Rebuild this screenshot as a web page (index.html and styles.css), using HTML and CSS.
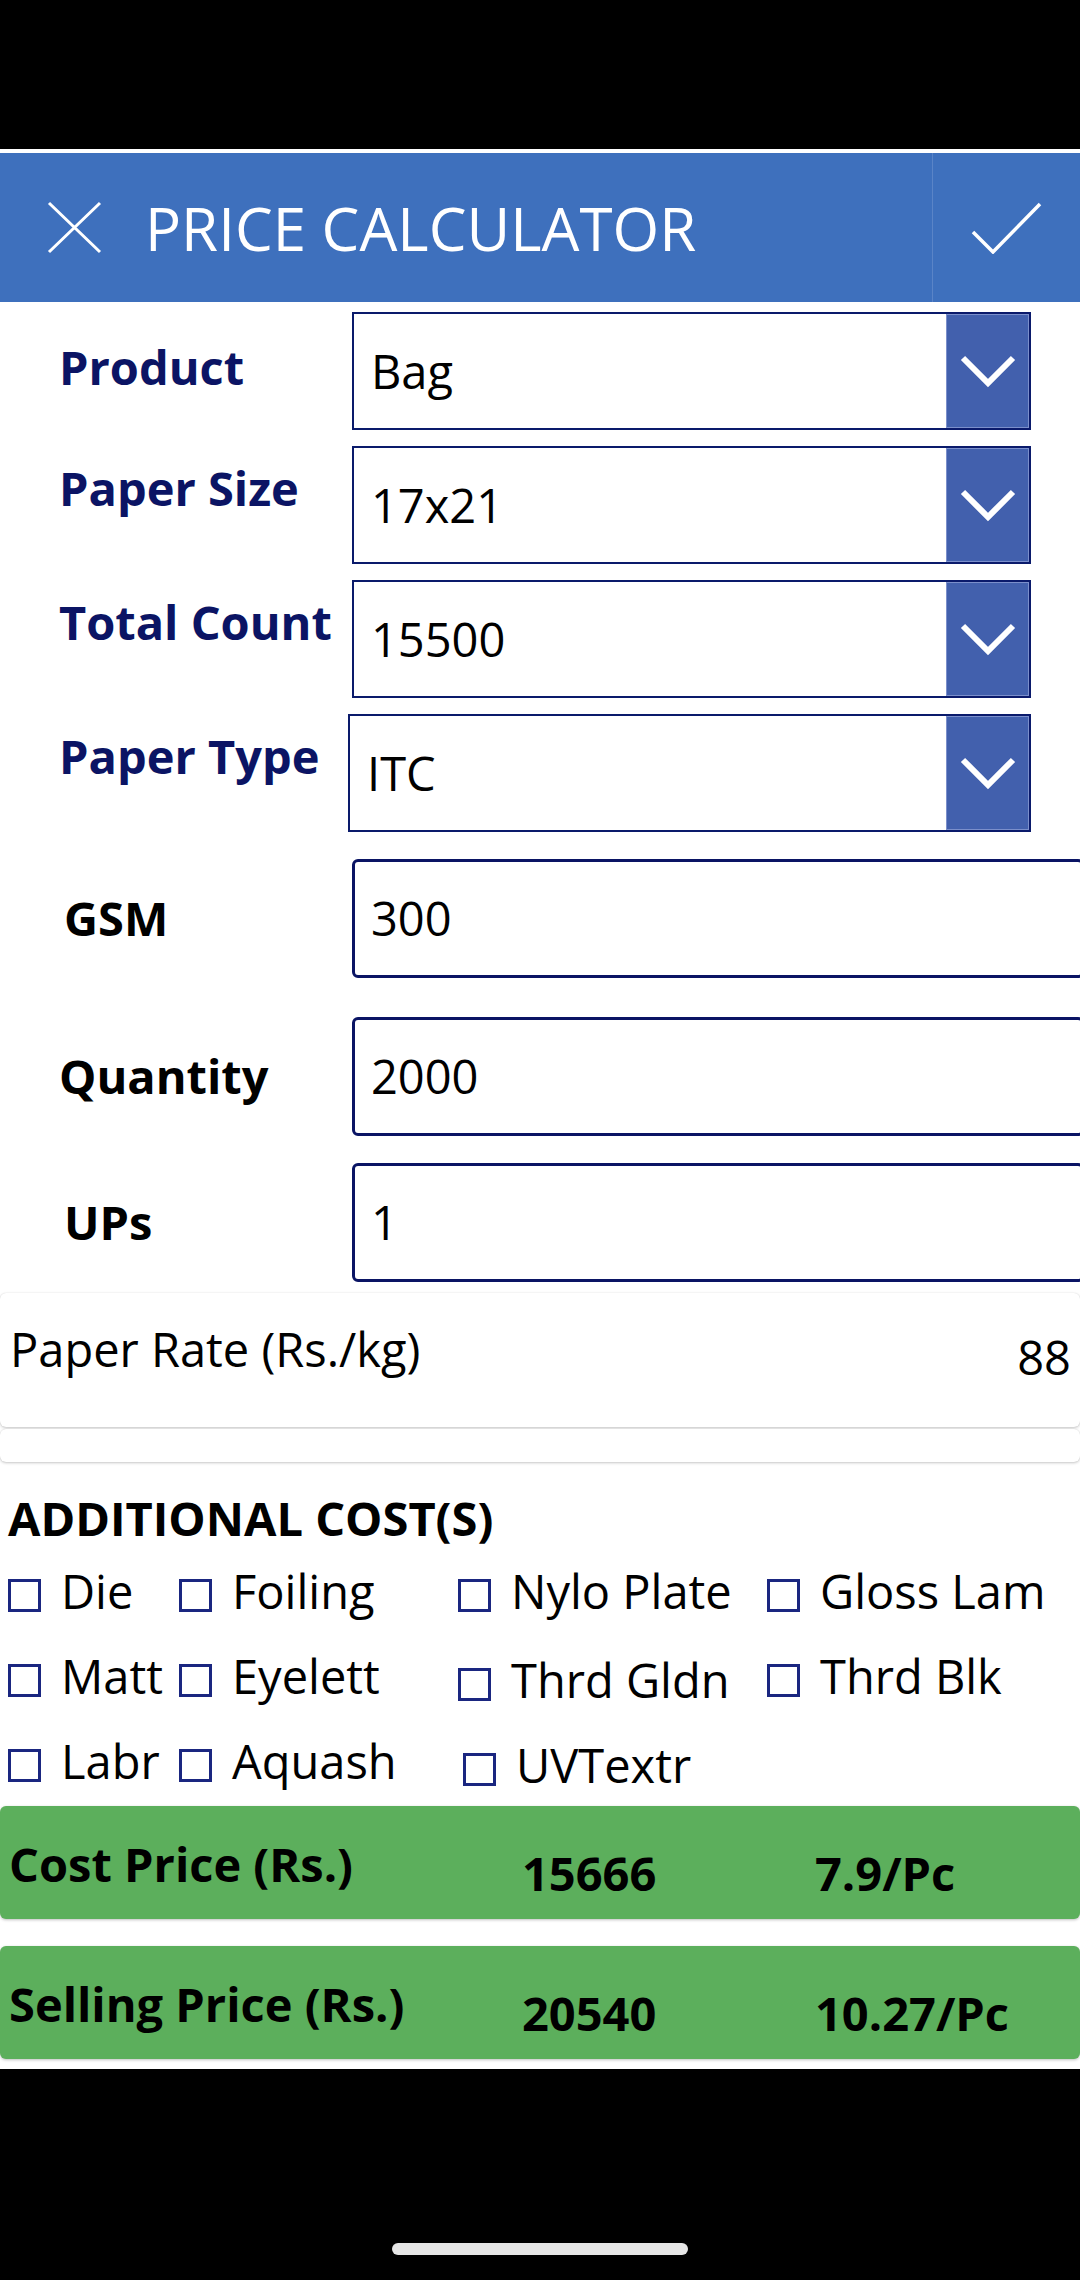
FILE: index.html
```html
<!DOCTYPE html>
<html lang="en">
<head>
<meta charset="utf-8">
<title>Price Calculator</title>
<link rel="stylesheet" href="styles.css">
</head>
<body>
<div class="status"></div>
<div class="app">
  <header class="topbar">
    <div class="btn-close">
      <svg width="55" height="53" viewBox="0 0 55 53"><path d="M2 2 L53 51 M53 2 L2 51" stroke="#fff" stroke-width="3" fill="none"/></svg>
    </div>
    <h1 class="title">PRICE CALCULATOR</h1>
    <div class="btn-ok">
      <svg width="71" height="52" viewBox="0 0 71 52"><polyline points="2,30 22,50 69,2" stroke="#fff" stroke-width="3.5" fill="none"/></svg>
    </div>
  </header>

  <main class="form">
    <div class="row row-dd row-first">
      <div class="label">Product</div>
      <div class="dd"><span class="dd-value">Bag</span><span class="dd-btn"><svg width="56" height="34" viewBox="0 0 56 34"><polyline points="3,4 28,29 53,4" stroke="#fff" stroke-width="6" fill="none"/></svg></span></div>
    </div>
    <div class="row row-dd">
      <div class="label">Paper Size</div>
      <div class="dd"><span class="dd-value">17x21</span><span class="dd-btn"><svg width="56" height="34" viewBox="0 0 56 34"><polyline points="3,4 28,29 53,4" stroke="#fff" stroke-width="6" fill="none"/></svg></span></div>
    </div>
    <div class="row row-dd">
      <div class="label">Total Count</div>
      <div class="dd"><span class="dd-value">15500</span><span class="dd-btn"><svg width="56" height="34" viewBox="0 0 56 34"><polyline points="3,4 28,29 53,4" stroke="#fff" stroke-width="6" fill="none"/></svg></span></div>
    </div>
    <div class="row row-dd">
      <div class="label">Paper Type</div>
      <div class="dd dd-wide"><span class="dd-value">ITC</span><span class="dd-btn"><svg width="56" height="34" viewBox="0 0 56 34"><polyline points="3,4 28,29 53,4" stroke="#fff" stroke-width="6" fill="none"/></svg></span></div>
    </div>

    <div class="row row-tb row-gsm">
      <div class="label label-dark indent">GSM</div>
      <div class="tb">300</div>
    </div>
    <div class="row row-tb row-qty">
      <div class="label label-dark">Quantity</div>
      <div class="tb">2000</div>
    </div>
    <div class="row row-tb row-ups">
      <div class="label label-dark indent">UPs</div>
      <div class="tb">1</div>
    </div>
  </main>

  <section class="card rate">
    <div class="rate-label">Paper Rate (Rs./kg)</div>
    <div class="rate-value">88</div>
  </section>
  <div class="card card-empty"></div>

  <h2 class="section-title">ADDITIONAL COST(S)</h2>
  <div class="checks">
    <label class="check"><span class="box"></span>Die</label>
    <label class="check"><span class="box"></span>Foiling</label>
    <label class="check"><span class="box"></span>Nylo Plate</label>
    <label class="check"><span class="box"></span>Gloss Lam</label>
    <label class="check"><span class="box"></span>Matt</label>
    <label class="check"><span class="box"></span>Eyelett</label>
    <label class="check check-low"><span class="box"></span>Thrd Gldn</label>
    <label class="check"><span class="box"></span>Thrd Blk</label>
    <label class="check"><span class="box"></span>Labr</label>
    <label class="check"><span class="box"></span>Aquash</label>
    <label class="check check-low check-shift"><span class="box"></span>UVTextr</label>
  </div>

  <section class="totals">
    <div class="bar">
      <div class="bar-label">Cost Price (Rs.)</div>
      <div class="bar-num">15666</div>
      <div class="bar-num">7.9/Pc</div>
    </div>
    <div class="bar">
      <div class="bar-label">Selling Price (Rs.)</div>
      <div class="bar-num">20540</div>
      <div class="bar-num">10.27/Pc</div>
    </div>
  </section>
</div>
<div class="nav"><div class="home"></div></div>
</body>
</html>
```

FILE: styles.css
```css
html, body {
  margin: 0;
  padding: 0;
}
body {
  width: 1080px;
  height: 2280px;
  background: #000;
  overflow: hidden;
  font-family: "Open Sans", "Noto Sans", sans-serif;
  color: #000;
}
.status {
  height: 149px;
  background: #000;
}
.app {
  background: #fff;
  padding-top: 4px;
  overflow: hidden;
}
.topbar {
  display: flex;
  height: 149px;
  background: #3e70bd;
}
.btn-close {
  flex: 0 0 148px;
  display: flex;
  align-items: center;
  justify-content: center;
}
.title {
  flex: 1;
  margin: 0 0 0 -3px;
  align-self: center;
  font-weight: 400;
  font-size: 60px;
  line-height: 72px;
  color: #fff;
  white-space: nowrap;
}
.btn-ok {
  flex: 0 0 147px;
  border-left: 1px solid #5a84c7;
  display: flex;
  align-items: center;
  justify-content: center;
}

/* form rows */
.row {
  display: flex;
  padding-left: 59px;
}
.label {
  flex: 0 0 293px;
  box-sizing: border-box;
  font-weight: 700;
  font-size: 47px;
  line-height: 55px;
  color: #0b1464;
  white-space: nowrap;
}
.label-dark {
  color: #000;
}
.indent {
  padding-left: 5px;
}
.row-dd {
  height: 118px;
  margin-top: 16px;
  align-items: flex-start;
}
.row-dd .label {
  margin-top: 15px;
}
.row-first {
  margin-top: 10px;
}
.row-first .label {
  margin-top: 28px;
}
.dd {
  flex: 0 0 679px;
  height: 118px;
  box-sizing: border-box;
  border: 2px solid #0a1a6b;
  display: flex;
}
.dd-wide {
  flex-basis: 683px;
  margin-left: -4px;
}
.dd-value {
  flex: 1;
  align-self: center;
  padding-left: 17px;
  font-size: 47px;
  line-height: 55px;
}
.dd-btn {
  flex: 0 0 83px;
  background: #4260ad;
  box-shadow: inset 0 0 0 1px #7b8fcb;
  display: flex;
  align-items: center;
  justify-content: center;
}
.row-tb {
  height: 119px;
  align-items: center;
}
.row-gsm { margin-top: 27px; }
.row-qty { margin-top: 39px; }
.row-ups { margin-top: 27px; }
.tb {
  flex: 0 0 732px;
  height: 119px;
  box-sizing: border-box;
  border: 3px solid #0a1464;
  border-radius: 6px;
  padding-left: 16px;
  display: flex;
  align-items: center;
  font-size: 47px;
  line-height: 55px;
}

/* cards */
.card {
  background: #fff;
  border-radius: 6px;
  box-shadow: 0 1px 3px rgba(0, 0, 0, 0.22), 0 0 1px rgba(0, 0, 0, 0.12);
}
.rate {
  margin-top: 11px;
  height: 134px;
  display: flex;
  justify-content: space-between;
  align-items: flex-start;
  padding: 0 9px 0 10px;
  font-size: 47px;
  line-height: 55px;
}
.rate-label { padding-top: 29px; }
.rate-value { padding-top: 37px; }
.card-empty {
  margin-top: 2px;
  height: 33px;
}

.section-title {
  margin: 29px 0 0;
  padding-left: 8px;
  font-weight: 700;
  font-size: 47px;
  line-height: 55px;
}

/* checkboxes */
.checks {
  margin-top: 18px;
  padding-left: 8px;
  display: grid;
  grid-template-columns: 171px 279px 309px 1fr;
  row-gap: 30px;
}
.check {
  display: flex;
  align-items: center;
  font-size: 47px;
  line-height: 55px;
  white-space: nowrap;
}
.box {
  flex: 0 0 33px;
  width: 33px;
  height: 33px;
  box-sizing: border-box;
  border: 3px solid #1a2680;
  margin-right: 20px;
  margin-top: 7px;
}
.check-low {
  position: relative;
  top: 4px;
}
.check-shift {
  margin-left: 5px;
}

/* totals */
.totals {
  margin-top: 17px;
  margin-bottom: 10px;
  display: flex;
  flex-direction: column;
  gap: 27px;
}
.bar {
  height: 113px;
  background: #5caf5c;
  border-radius: 6px;
  box-shadow: 0 1px 3px rgba(0, 0, 0, 0.25);
  display: grid;
  grid-template-columns: 513px 293px 1fr;
  padding-left: 9px;
  align-items: start;
  font-weight: 700;
  font-size: 47px;
  line-height: 55px;
  white-space: nowrap;
}
.bar-label { padding-top: 31px; }
.bar-num { padding-top: 40px; }

.nav {
  height: 213px;
  background: #000;
  display: flex;
  justify-content: center;
  padding-top: 174px;
  box-sizing: border-box;
}
.home {
  width: 296px;
  height: 12px;
  border-radius: 6px;
  background: #e6e6e6;
}
```
